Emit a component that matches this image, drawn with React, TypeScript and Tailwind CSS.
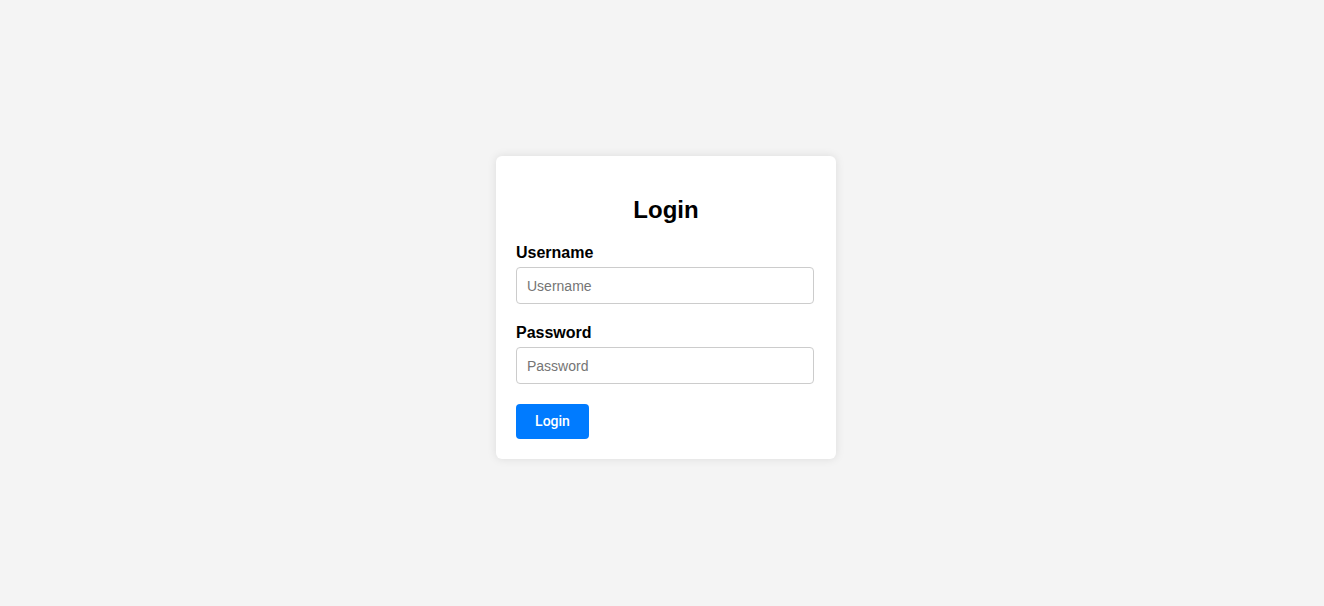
import React from "react";

export default function App() {
  return (
    <div
      className="w-full h-[606px] bg-[#f4f4f4] flex justify-center pt-[156px] pl-[8px]"
      style={{ fontFamily: '"Liberation Sans", Arial, sans-serif' }}
    >
      <div className="w-[340px] h-[303px] bg-white rounded-[6px] shadow-[0_0_10px_rgba(0,0,0,0.1)] px-5 pt-[40px] pb-5 flex flex-col">
        <h2 className="text-[24px] leading-[28px] font-bold text-black text-center">Login</h2>
        <div className="mt-[20px] flex flex-col">
          <label className="text-[16px] leading-[18px] font-bold text-black">Username</label>
          <input
            type="text"
            placeholder="Username"
            className="mt-[5px] w-[298px] h-[37px] border border-[#cccccc] rounded-[4px] px-[10px] text-[14px] text-black placeholder:text-[#757575] outline-none"
          />
        </div>
        <div className="mt-[20px] flex flex-col">
          <label className="text-[16px] leading-[18px] font-bold text-black">Password</label>
          <input
            type="password"
            placeholder="Password"
            className="mt-[5px] w-[298px] h-[37px] border border-[#cccccc] rounded-[4px] px-[10px] text-[14px] text-black placeholder:text-[#757575] outline-none"
          />
        </div>
        <div className="mt-[20px]">
          <button className="w-[73px] h-[35px] bg-[#007bff] text-white text-[14px] rounded-[4px]" style={{ fontFamily: 'Roboto, "Liberation Sans", sans-serif', fontWeight: 500 }}>
            Login
          </button>
        </div>
      </div>
    </div>
  );
}
